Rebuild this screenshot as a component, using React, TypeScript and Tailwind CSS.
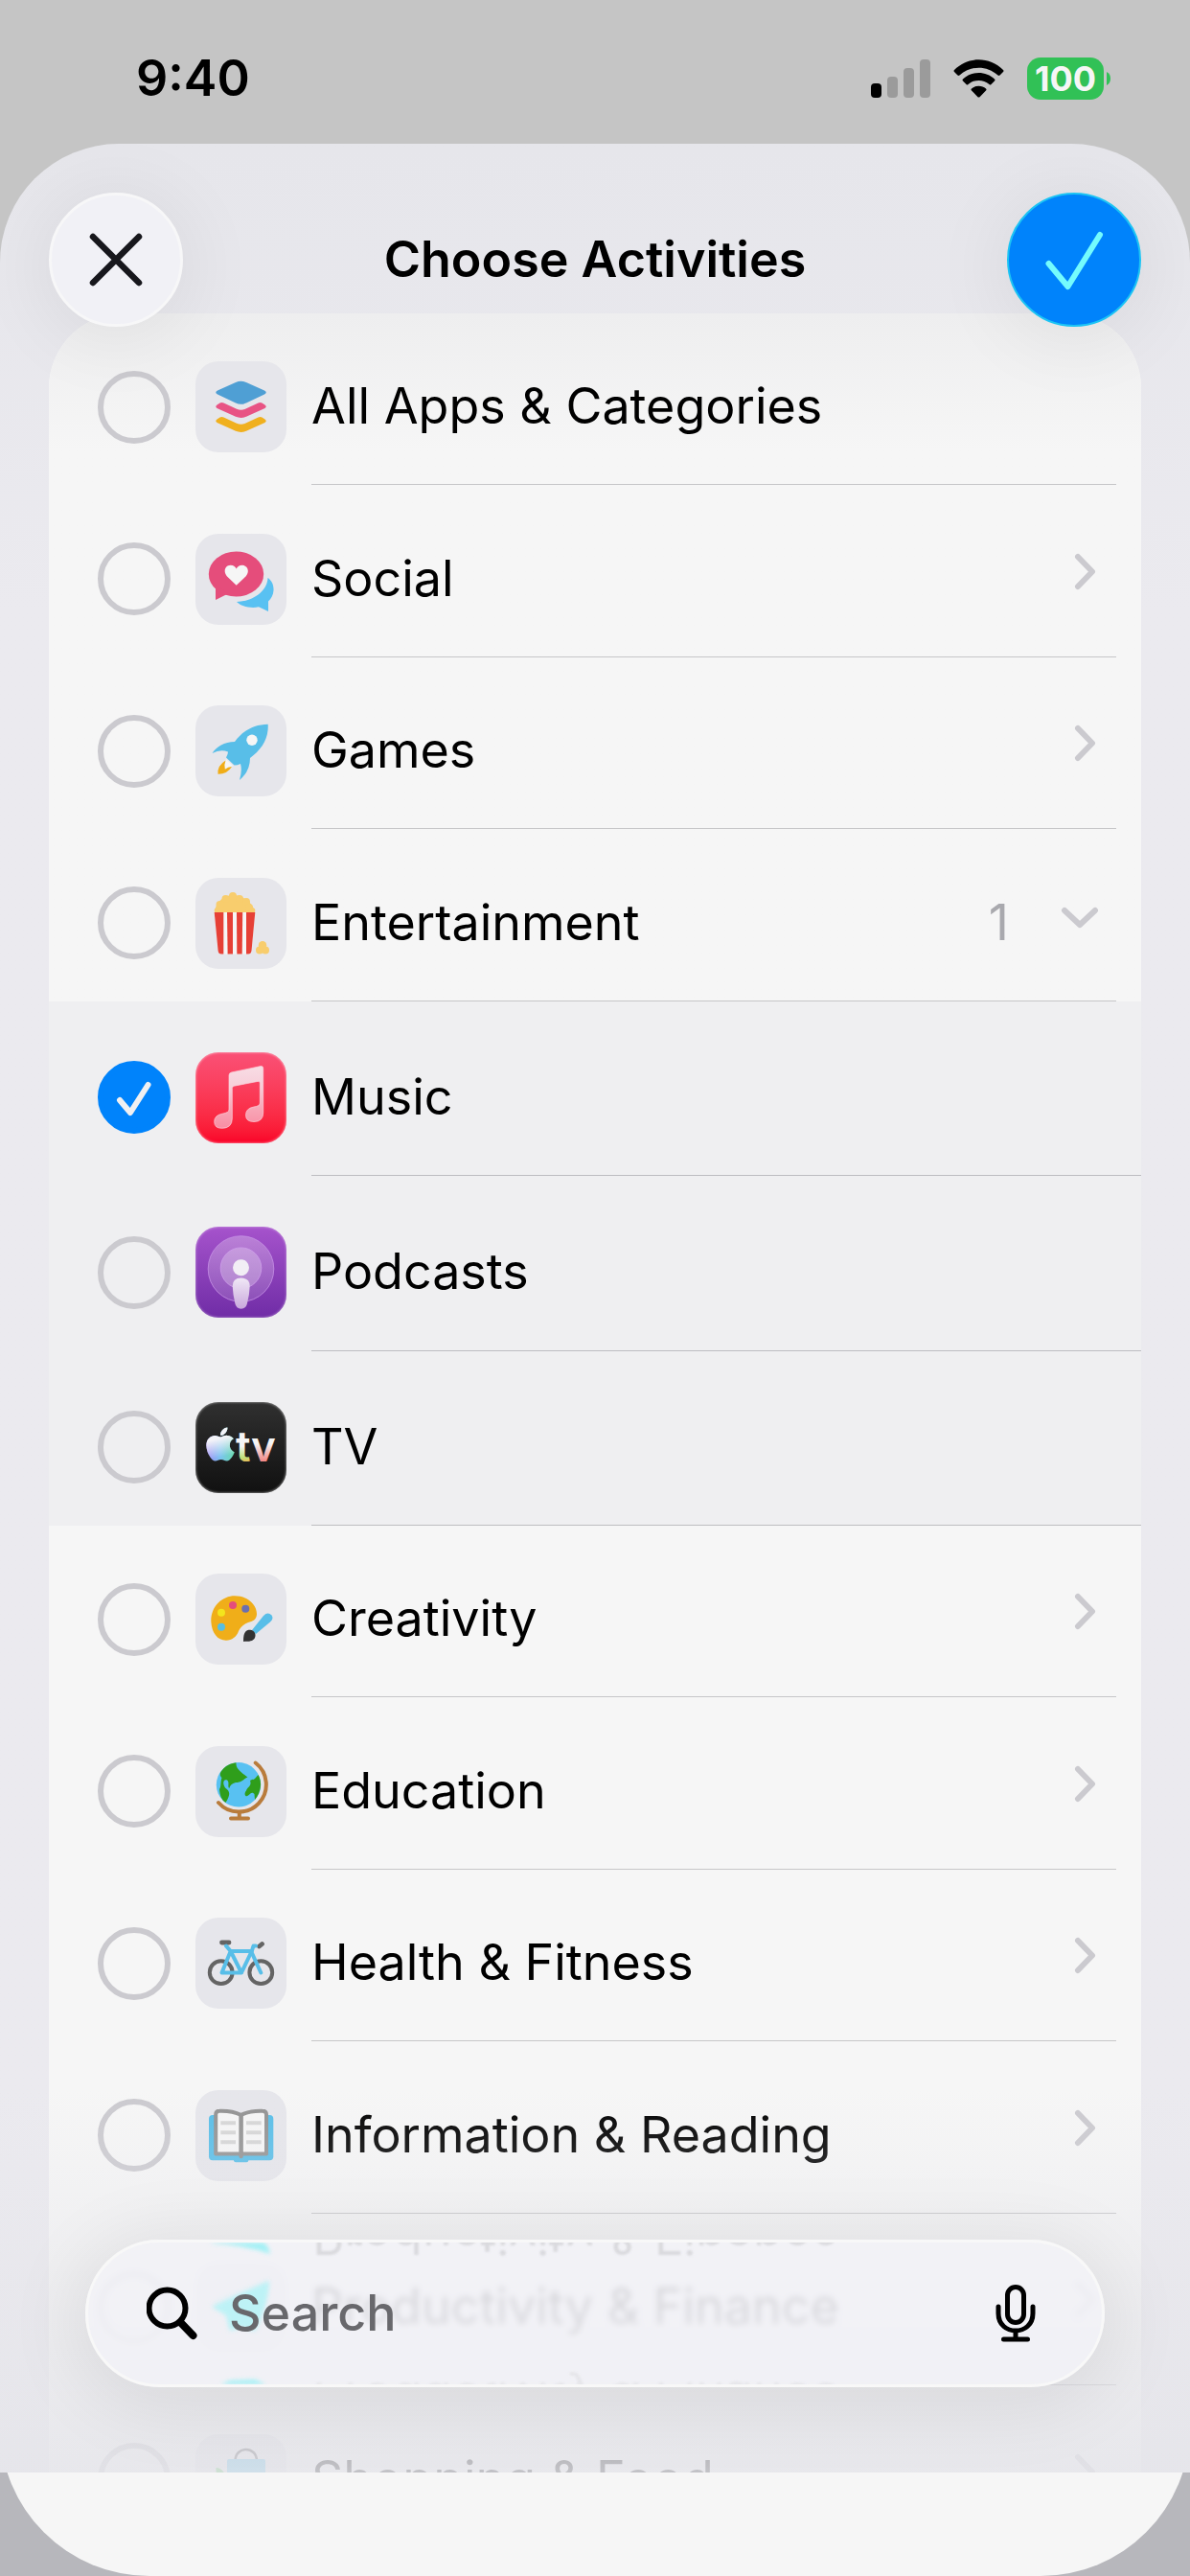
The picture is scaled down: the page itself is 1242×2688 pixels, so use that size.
import React, { useState } from "react";
import { FaApple } from "react-icons/fa";

type IconProps = { children: React.ReactNode };

function Glyph({ children }: IconProps) {
  return (
    <svg viewBox="0 0 95 95" className="block size-full" aria-hidden="true">
      {children}
    </svg>
  );
}

const layerPath =
  "M22.5 45.5 L25.5 43.6 Q27.5 42.6 29.5 43.6 L43 49.8 Q47.5 51.8 52 49.8 L65.5 43.6 Q67.5 42.6 69.5 43.6 L72.5 45.5 Q75 47.3 72.5 49 L53 57.8 Q47.5 60 42 57.8 L22.5 49 Q20 47.3 22.5 45.5Z";

const StackIcon = () => (
  <Glyph>
    <path
      fill="#4f9fd4"
      d="M42 22 Q47.5 19.5 53 22 L72 30.6 Q75.5 32.6 72 34.6 L53 43.5 Q47.5 46 42 43.5 L23 34.6 Q19.5 32.6 23 30.6Z"
    />
    <path fill="#e85384" d={layerPath} />
    <path fill="#f0b01e" d={layerPath} transform="translate(0 15)" />
  </Glyph>
);

const SocialIcon = () => (
  <Glyph>
    <ellipse cx="42.5" cy="42" rx="28.7" ry="23.5" fill="#e54d7b" />
    <path fill="#e54d7b" d="M15 48 Q18 54 21 56.5 V69 L34 62.5Z" />
    <path
      fill="#f6f6f6"
      d="M42.7 53.8 L33 44.5 C28.5 39.5 31 32.8 36.5 32.8 C40 32.8 42 35 42.7 36.5 C43.4 35 45.4 32.8 49 32.8 C54.5 32.8 57 39.5 52.5 44.5Z"
    />
    <path
      fill="#58c1f2"
      d="M75.5 46 C80 49 81.8 54 81.5 59 C81.3 64 79 67.5 76 70.5 V81 L66 76.3 C58 78 48 76 43 71 C58 71 75 61 75.5 46Z"
    />
  </Glyph>
);

const RocketIcon = () => (
  <Glyph>
    <path
      fill="#58bee8"
      d="M75.7 19.7 C60 20 49 27 41 38 C30 38 22 43 17.5 50 Q26 45.5 34 48.5 Q34 51 32 54.5 L40.5 62.5 Q44 62.5 47 61 Q49 68 46 78 Q57 69 57 55 C69 46 76.5 35 75.7 19.7Z"
    />
    <circle cx="59" cy="36.3" r="5.7" fill="#f6f6f6" />
    <path fill="#f6f6f6" d="M32 56 Q29 62 30.5 66.5 Q35 66 39 63Z" />
    <path
      fill="#f0ad18"
      d="M31.5 57.5 Q22.5 63 23.5 71.8 Q33 72 38 64 Q34 64 30.8 66.8 Q29.5 62.5 31.5 57.5Z"
    />
  </Glyph>
);

const PopcornIcon = () => (
  <Glyph>
    <g fill="#f8cd6d">
      <path d="M20 36.5 C20 28 28 18 39 18 C51 18 61 28 62 36.5Z" />
      <circle cx="39" cy="19" r="4" />
      <circle cx="31.5" cy="22" r="4" />
      <circle cx="25.5" cy="28" r="4" />
      <circle cx="46" cy="22" r="4" />
      <circle cx="53" cy="25" r="4" />
      <circle cx="56" cy="31" r="4" />
      <circle cx="22.5" cy="34" r="2.8" />
      <circle cx="59.5" cy="34" r="2.8" />
      <circle cx="67" cy="75.5" r="4" />
      <circle cx="73" cy="75.5" r="4" />
      <circle cx="70" cy="70.3" r="4.2" />
    </g>
    <path fill="#f6f6f6" d="M19.7 36 H62.3 L58.5 76 Q58 79.5 55 79.5 H27 Q24 79.5 23.6 76Z" />
    <g fill="#e64036">
      <path d="M19.7 36 H29.3 V79.5 H27 Q24 79.5 23.6 76Z" />
      <path d="M33 36 H39 V79.5 H33.6Z" />
      <path d="M43 36 H49.2 L48.7 79.5 H43.3Z" />
      <path d="M53 36 H62.3 L58.5 76 Q58 79.5 55 79.5 H53Z" />
    </g>
  </Glyph>
);

const MusicIcon = () => (
  <Glyph>
    <defs>
      <linearGradient id="noteFill" x1="0" y1="0" x2="0" y2="1">
        <stop offset="0" stopColor="#f8dde5" />
        <stop offset="0.35" stopColor="#f7cdd8" />
        <stop offset="0.7" stopColor="#f8a5b6" />
        <stop offset="1" stopColor="#f88da3" />
      </linearGradient>
    </defs>
    <path
      fill="url(#noteFill)"
      stroke="#fbd3dc"
      strokeWidth="0.7"
      d="M35 24 Q35 21.5 37.5 21 L68 14.6 Q70.7 14.2 70.7 16.8 V63 Q70.7 72.5 61 72.5 Q52.5 72.5 52.5 65.5 Q52.5 58.5 61 57 Q67.3 56.2 67.3 53 V32 Q67.3 30 65 30.4 L40.3 35.2 Q38.3 35.7 38.3 37.5 V69 Q38.3 79.3 27.5 79.3 Q19.7 79.3 19.7 72.5 Q19.7 65.8 28 64.2 Q35 63 35 60Z"
    />
  </Glyph>
);

const PodcastIcon = () => (
  <Glyph>
    <defs>
      <linearGradient id="castBody" x1="0" y1="0" x2="0" y2="1">
        <stop offset="0" stopColor="#f0e8f6" />
        <stop offset="1" stopColor="#c9a8dc" />
      </linearGradient>
      <linearGradient id="castRing" x1="0" y1="0" x2="0" y2="1">
        <stop offset="0" stopColor="#fff" stopOpacity="0.28" />
        <stop offset="1" stopColor="#fff" stopOpacity="0.14" />
      </linearGradient>
    </defs>
    <circle cx="47.5" cy="44" r="34.3" fill="url(#castRing)" stroke="#c792e6" strokeWidth="0.8" />
    <circle cx="47.5" cy="43.2" r="21.3" fill="#fff" fillOpacity="0.26" stroke="#cf9feb" strokeWidth="0.8" />
    <circle cx="47.5" cy="42.7" r="8.5" fill="#f2eef5" />
    <path
      fill="url(#castBody)"
      d="M38.7 62 Q38.7 53.5 47.6 53.5 Q56.7 53.5 56.7 62 Q56.5 70 54 80 Q52.7 85.7 47.6 85.7 Q42.5 85.7 41.3 80 Q39 70 38.7 62Z"
    />
  </Glyph>
);

const TvIcon = () => (
  <Glyph>
    <defs>
      <linearGradient id="appleFill" x1="0" y1="0" x2="1" y2="0">
        <stop offset="0" stopColor="#a088f7" />
        <stop offset="0.5" stopColor="#7cc4f0" />
        <stop offset="1" stopColor="#68dcae" />
      </linearGradient>
      <linearGradient id="appleShine" x1="0" y1="0" x2="0.2" y2="1">
        <stop offset="0.4" stopColor="#f4f4f8" />
        <stop offset="0.95" stopColor="#f4f4f8" stopOpacity="0" />
      </linearGradient>
      <linearGradient id="tFill" x1="0" y1="0" x2="0" y2="1">
        <stop offset="0.5" stopColor="#f5f5f5" />
        <stop offset="0.72" stopColor="#bfe07a" />
        <stop offset="0.82" stopColor="#f3b04f" />
      </linearGradient>
      <linearGradient id="vFill" x1="0" y1="0" x2="0" y2="1">
        <stop offset="0.45" stopColor="#f5f5f5" />
        <stop offset="0.8" stopColor="#f28482" />
      </linearGradient>
    </defs>
    <FaApple x="6" y="24" size="40" fill="url(#appleFill)" stroke="none" />
    <FaApple x="6" y="24" size="40" fill="url(#appleShine)" stroke="none" />
    <g fontFamily="Inter, sans-serif" fontSize="44" fontWeight="600">
      <text x="42" y="62" fill="url(#tFill)">t</text>
      <text x="58" y="62" fill="url(#vFill)">v</text>
    </g>
  </Glyph>
);

const PaletteIcon = () => (
  <Glyph>
    <path
      fill="#f0ae19"
      d="M16.3 50 C16 34 28 23.3 41 23.3 C55 23.3 64 33 64 42 C64 48 59.5 50 55 51 C50 53 47 55.5 45 60 C43 66 38 69.7 32 69.7 C23 69.7 17 62 16.3 50Z"
    />
    <circle cx="39" cy="33" r="4" fill="#e54d7b" />
    <circle cx="52.3" cy="36.7" r="4" fill="#6b6fb0" />
    <circle cx="27" cy="40.7" r="4" fill="#f3e51d" />
    <circle cx="27" cy="55.7" r="4" fill="#58bee0" />
    <path fill="#58bee8" d="M59 59 L71 44 Q75.5 39.5 79.5 43.5 Q82 47 78 50.5 L63 63Z" />
    <path fill="#323232" d="M50 71 C50 61 52.5 58.7 57 58.7 C62 59 64 64 61.5 68 C58.5 71.5 54 70.5 50 71Z" />
  </Glyph>
);

const GlobeIcon = () => (
  <Glyph>
    <circle cx="45" cy="40.3" r="23.2" fill="#58c1f2" />
    <g fill="#2f9e1b">
      <path d="M42.5 17.2 C42 23 46 26 54.5 32.5 C50 34 49 38 42 38 C38 39 36 41 35.3 44 C33 42 36 38 33 35.5 C29 34 28 39 31 43.5 C36 47 37 50 31.5 59 C27 56 25.5 51 25 45 C27 43 26 37 27.5 33 C24.5 30 26 27 28 25 C31 21 36 18 42.5 17.2Z" />
      <path d="M65.5 30 L62 34 C60 36 56 34 57.5 38 C58 42 54 43 53 46.5 C50 50 52.5 54 55 51.5 C58 49 59 47.5 61.5 50 L62 56 C68.5 48 70 38 65.5 30Z" />
    </g>
    <g fill="none" stroke="#b97c3c" strokeWidth="4" strokeLinecap="round">
      <path d="M62.7 17.5 A28.5 28.5 0 1 1 24 59" />
      <path d="M45.8 69 V75 M37 75.5 H55" />
    </g>
  </Glyph>
);

const BikeIcon = () => (
  <Glyph>
    <g fill="none" strokeLinecap="round" strokeLinejoin="round">
      <g stroke="#646464" strokeWidth="4">
        <circle cx="26.7" cy="57.2" r="11.9" />
        <circle cx="68.3" cy="57.2" r="11.9" />
        <path d="M27.5 26 H35 M66.5 30 L69.5 27.5" strokeWidth="4.8" />
      </g>
      <g stroke="#58bee8" strokeWidth="4">
        <path d="M32 29.5 L36.7 35 H58.7 L48 57.5 H27.5 L36.7 35 L48 57.5" />
        <path d="M63 29.5 H60.5 L58.5 36 L68.3 57.5" />
      </g>
    </g>
  </Glyph>
);

const BookIcon = () => (
  <Glyph>
    <rect x="14" y="26" width="67.3" height="47.3" rx="4" fill="#58bee8" />
    <rect x="40" y="70" width="15.3" height="5.3" rx="2" fill="#58bee8" />
    <path
      fill="#f6f6f6"
      stroke="#929292"
      strokeWidth="4"
      strokeLinejoin="round"
      d="M21.2 66.5 V25.5 Q21.2 21.8 25 21.8 Q38 21.3 47.6 26 Q57 21.3 70 21.8 Q74 21.8 74 25.5 V66.5Z"
    />
    <path d="M47.6 26 V69" stroke="#929292" strokeWidth="4.5" strokeLinecap="round" />
    <path
      d="M26.3 34.3 H42 M26.3 44.3 H42 M26.3 54.3 H42 M53 34.3 H68.7 M53 44.3 H68.7 M53 54.3 H68.7"
      stroke="#d6d6d6"
      strokeWidth="4"
    />
  </Glyph>
);

const PlaneIcon = () => (
  <Glyph>
    <path fill="#5fe0ee" d="M77 19 L17 44 L33 54 L37 74 L48 66 L63 74Z" />
  </Glyph>
);

const BagIcon = () => (
  <Glyph>
    <path d="M41.5 28 C41.5 12 64 12 64 28" fill="none" stroke="#55555a" strokeWidth="2.5" />
    <rect x="33" y="26" width="40" height="46" rx="2" fill="#58bee8" />
    <path d="M21.5 35 Q28 35 32 44 L32 70 Q22 60 21.5 35Z" fill="#4fc054" />
  </Glyph>
);

type Row = {
  name: string;
  Icon: () => React.ReactElement;
  tile?: string;
  count?: number;
  state?: "open" | "closed";
};

const plainTile = "bg-[#e6e6eb]";

const topRows: Row[] = [
  { name: "All Apps & Categories", Icon: StackIcon },
  { name: "Social", Icon: SocialIcon, state: "closed" },
  { name: "Games", Icon: RocketIcon, state: "closed" },
  { name: "Entertainment", Icon: PopcornIcon, count: 1, state: "open" },
];

const appRows: Row[] = [
  {
    name: "Music",
    Icon: MusicIcon,
    tile: "bg-linear-to-b from-[#fa5076] to-[#fa0028] shadow-[inset_0_0_2px_1px_rgba(255,255,255,0.35)]",
  },
  {
    name: "Podcasts",
    Icon: PodcastIcon,
    tile: "bg-linear-to-b from-[#a653cc] to-[#702ca6] shadow-[inset_0_0_2px_1px_rgba(255,255,255,0.25)]",
  },
  {
    name: "TV",
    Icon: TvIcon,
    tile: "bg-linear-to-b from-[#303030] to-[#111111] shadow-[inset_0_0_2px_1px_rgba(255,255,255,0.35)]",
  },
];

const bottomRows: Row[] = [
  { name: "Creativity", Icon: PaletteIcon, state: "closed" },
  { name: "Education", Icon: GlobeIcon, state: "closed" },
  { name: "Health & Fitness", Icon: BikeIcon, state: "closed" },
  { name: "Information & Reading", Icon: BookIcon, state: "closed" },
  { name: "Productivity & Finance", Icon: PlaneIcon, state: "closed" },
  { name: "Shopping & Food", Icon: BagIcon, state: "closed" },
];

function ActivityRow({
  row,
  nested,
  checked,
  onToggle,
}: {
  row: Row;
  nested?: boolean;
  checked: boolean;
  onToggle: () => void;
}) {
  const id = row.name.toLowerCase().replace(/[^a-z]+/g, "-");
  const { Icon } = row;
  return (
    <li className={nested ? "flex h-[182px] pl-[51px] even:h-[183px]" : "flex h-[179px] pl-[51px] even:h-[180px]"}>
      <span className={nested ? "flex items-center gap-[26px] pt-[18px]" : "flex items-center gap-[26px] pt-4"}>
        <span className="relative size-[76px]">
          <input
            id={id}
            type="checkbox"
            checked={checked}
            onChange={onToggle}
            className="block size-full appearance-none rounded-full border-6 border-[#cbcacf] checked:border-[#0083fb] checked:bg-[#0083fb]"
          />
          {checked && (
            <svg viewBox="0 0 76 76" className="pointer-events-none absolute inset-0" aria-hidden="true">
              <path
                d="M23 41 L34 54 L52.5 25"
                fill="none"
                stroke="#f0f0f2"
                strokeWidth="6"
                strokeLinecap="round"
                strokeLinejoin="round"
              />
            </svg>
          )}
        </span>
        <span className={`size-[95px] rounded-[24px] ${row.tile ?? plainTile}`}>
          <Icon />
        </span>
      </span>
      <span
        className={
          nested
            ? "ml-[26px] flex flex-1 items-center border-b border-[#bdbdc1] pt-[2px]"
            : "mr-[26px] ml-[26px] flex flex-1 items-center border-b border-[#c6c6c8]"
        }
      >
        <label htmlFor={id} className="flex-1 pt-4 text-[52px] leading-[64px] whitespace-nowrap text-black">
          {row.name}
        </label>
        {row.count !== undefined && (
          <span className="mr-[54px] pt-4 text-[52px] leading-[64px] text-[#a9a9ae]">{row.count}</span>
        )}
        {row.state && (
          <button type="button" aria-label={`Show ${row.name}`} className="mr-[18px]">
            {row.state === "open" ? (
              <svg width="40" height="38" viewBox="0 0 40 38" className="block">
                <path d="M4 14 L20 29 L36 14" fill="none" stroke="#cbcacf" strokeWidth="6" strokeLinecap="round" strokeLinejoin="round" />
              </svg>
            ) : (
              <svg width="26" height="40" viewBox="0 0 26 40" className="block">
                <path d="M4 5 L19 20.5 L4 36" fill="none" stroke="#cbcacf" strokeWidth="6" strokeLinecap="round" strokeLinejoin="round" />
              </svg>
            )}
          </button>
        )}
      </span>
    </li>
  );
}

function StatusBar() {
  return (
    <div className="flex h-[150px] shrink-0 items-center justify-between pt-[14px] pr-[83px] pl-[142px]">
      <span className="text-[52px] leading-[64px] font-semibold text-black">9:40</span>
      <span className="flex items-center gap-[24px]">
        <svg width="62" height="40" viewBox="0 0 62 40" aria-hidden="true">
          <rect x="0" y="25" width="11" height="15" rx="4" fill="#000" />
          <rect x="17" y="18" width="11" height="22" rx="4" fill="#9b9b9b" />
          <rect x="34" y="9" width="11" height="31" rx="4" fill="#9b9b9b" />
          <rect x="51" y="0" width="11" height="40" rx="4" fill="#9b9b9b" />
        </svg>
        <svg width="53" height="40" viewBox="0 0 53 40" aria-hidden="true">
          <path d="M1 11 C15 -3.3 38 -3.3 52 11 Q53 12 52 13 L48.5 16.6 Q47.5 17.5 46.5 16.6 C35 6 18 6 6.5 16.6 Q5.5 17.5 4.5 16.6 L1 13 Q0 12 1 11Z" />
          <path d="M10 20.5 C19 11.8 34 11.8 43 20.5 Q44 21.5 43 22.5 L39.5 26 Q38.5 27 37.5 26 C31 20.5 22 20.5 15.5 26 Q14.5 27 13.5 26 L10 22.5 Q9 21.5 10 20.5Z" />
          <path d="M19 30.5 C23 26.8 30 26.8 34 30.5 Q35 31.5 34 32.5 L27.5 39.2 Q26.5 40 25.5 39.2 L19 32.5 Q18 31.5 19 30.5Z" />
        </svg>
        <span className="flex items-center gap-[3px]">
          <span className="flex h-[44px] w-[80px] items-center justify-center rounded-[14px] bg-[#31c156] text-[36px] leading-[44px] font-bold text-[#f6f6f6]">
            100
          </span>
          <svg width="4" height="14" viewBox="0 0 4 14" aria-hidden="true">
            <path d="M0 0 Q4 2 4 7 Q4 12 0 14Z" fill="#31c156" />
          </svg>
        </span>
      </span>
    </div>
  );
}

function SearchBar() {
  return (
    <div className="absolute inset-x-[89px] bottom-[89px] flex h-[154px] items-center overflow-hidden rounded-full border-3 border-[#f8f8f8] bg-[#f3f3f7]/80 backdrop-blur-[3px]">
      <div className="pointer-events-none absolute inset-0 overflow-hidden rounded-full" aria-hidden="true">
        <svg viewBox="0 0 95 148" width="95" height="148" className="absolute top-0 left-[112px] blur-[2px]">
          <path d="M14 1 Q50 2 78 12 Q76 -2 60 -4Z" fill="#a4f0f5" />
          <path d="M77 40 L17 67 L32 76 L36 92 L48 88 L62 92 Q76 66 77 40Z" fill="#bdf2f6" />
          <path d="M24 149 L36 144 L62 143 L76 149Z" fill="#a4f0f5" />
        </svg>
        <span className="absolute -top-[39px] left-[234px] -scale-y-100 text-[52px] leading-[64px] whitespace-nowrap text-[#dadade] blur-[1px]">
          Productivity &amp; Finance
        </span>
        <span className="absolute top-[132px] left-[234px] -scale-y-100 text-[52px] leading-[64px] whitespace-nowrap text-[#e6e6ea] blur-[1px]">
          Productivity &amp; Finance
        </span>
      </div>
      <svg width="54" height="56" viewBox="0 0 54 56" className="relative ml-[61px] shrink-0" aria-hidden="true">
        <circle cx="21.5" cy="22.5" r="19" fill="none" stroke="#000" strokeWidth="6" />
        <path d="M35.5 37.5 L48.5 51" stroke="#000" strokeWidth="8" strokeLinecap="round" />
      </svg>
      <input
        type="text"
        aria-label="Search"
        placeholder="Search"
        className="relative ml-[32px] min-w-0 flex-1 bg-transparent text-[52px] leading-[64px] font-medium text-black outline-none placeholder:text-[#68686c]"
      />
      <button type="button" aria-label="Dictate" className="relative mr-[69px] shrink-0">
        <svg width="42" height="60" viewBox="0 0 42 60" className="block" fill="none" stroke="#000" strokeWidth="5" strokeLinecap="round">
          <rect x="12.5" y="2.5" width="17" height="37" rx="8.5" />
          <path d="M3 23 V30 C3 54 39 54 39 30 V23 M21 48 V56 M8.5 57 H33.5" />
        </svg>
      </button>
    </div>
  );
}

export default function App() {
  const [selected, setSelected] = useState<string[]>(["Music"]);
  const toggle = (name: string) =>
    setSelected((s) => (s.includes(name) ? s.filter((n) => n !== name) : [...s, name]));
  const renderRows = (rows: Row[], nested = false) =>
    rows.map((row) => (
      <ActivityRow
        key={row.name}
        row={row}
        nested={nested}
        checked={selected.includes(row.name)}
        onToggle={() => toggle(row.name)}
      />
    ));

  return (
    <div className="flex h-screen flex-col overflow-hidden bg-[#c5c5c5] font-['Inter','Liberation_Sans',sans-serif]">
      <StatusBar />
      <main className="relative min-h-0 flex-1 overflow-hidden rounded-t-[124px] bg-linear-to-b from-[#e6e6eb] to-[#ebeaef] to-20%">
        <header className="relative z-10 flex h-[177px] items-start justify-between px-[51px] pt-[51px]">
          <button
            type="button"
            aria-label="Close"
            className="flex size-[140px] items-center justify-center rounded-full border-3 border-[#f7f7f8] bg-[#f1f1f6] shadow-[0_8px_80px_10px_rgba(0,0,0,0.06)]"
          >
            <svg width="56" height="56" viewBox="0 0 56 56" aria-hidden="true">
              <path d="M4 4 L52 52 M52 4 L4 52" stroke="#17171c" strokeWidth="6.5" strokeLinecap="round" />
            </svg>
          </button>
          <h1 className="flex h-[140px] items-center text-[52px] leading-[64px] font-semibold text-black">
            Choose Activities
          </h1>
          <button
            type="button"
            aria-label="Done"
            className="flex size-[140px] items-center justify-center rounded-full border-2 border-[#1cc4f4] bg-[#0083fb] shadow-[0_8px_80px_10px_rgba(0,0,0,0.06)]"
          >
            <svg width="64" height="64" viewBox="0 0 64 64" aria-hidden="true">
              <path d="M5.5 36 L25.5 60 L59 6" fill="none" stroke="#74fbfd" strokeWidth="6" strokeLinecap="round" strokeLinejoin="round" />
            </svg>
          </button>
        </header>
        <div className="mx-[51px] overflow-hidden rounded-t-[78px] bg-[#f6f6f6]">
          <div className="bg-linear-to-b from-[#eeeeef] to-[#f6f6f6] to-20%">
            <ul>{renderRows(topRows)}</ul>
          </div>
          <ul className="bg-[#efeff1]">{renderRows(appRows, true)}</ul>
          <ul>{renderRows(bottomRows)}</ul>
        </div>
        <div
          className="pointer-events-none absolute inset-x-0 bottom-0 h-[400px] bg-linear-to-b from-[#e5e5ea]/0 via-[#e5e5ea]/45 to-[#e5e5ea]/85"
          aria-hidden="true"
        />
        <div
          className="pointer-events-none absolute inset-x-[89px] bottom-[89px] h-[154px] rounded-full shadow-[0_10px_80px_10px_rgba(0,0,0,0.08)]"
          aria-hidden="true"
        />
        <SearchBar />
      </main>
      <footer className="h-[108px] shrink-0 overflow-hidden bg-[#b7b7bc]">
        <div className="-mt-[60px] h-[168px] rounded-b-[156px] bg-[#f6f6f6]" />
      </footer>
    </div>
  );
}
